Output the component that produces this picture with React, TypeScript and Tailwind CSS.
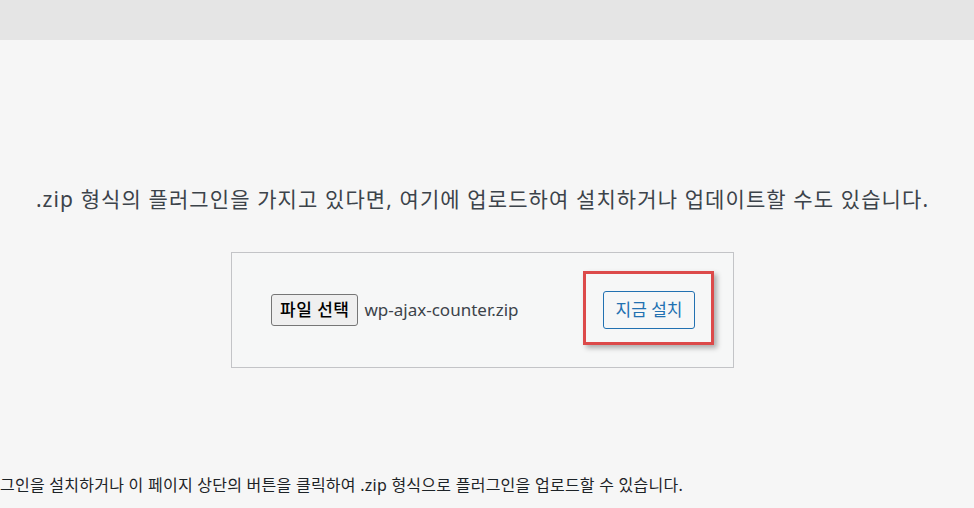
export default function App() {
  return (
    <div
      className="h-[508px] w-[974px] overflow-hidden bg-[#f6f6f6] text-[#3c434a]"
      style={{ fontFamily: '"Noto Sans", "Noto Sans CJK KR", sans-serif' }}
    >
      <div className="h-[40px] bg-[#e5e5e5]" />

      <div className="flex flex-col items-center pr-[9px] pt-[144px]">
        <p className="whitespace-nowrap text-[21px] leading-[30px] tracking-[1.1px] text-[#3c434a]">
          .zip 형식의 플러그인을 가지고 있다면, 여기에 업로드하여 설치하거나 업데이트할 수도 있습니다.
        </p>

        <div className="mt-[38px] flex h-[116px] w-[503px] items-center border border-[#c3c4c7] bg-[#f6f7f7] pl-[39px]">
          <button className="h-[32px] rounded-[3px] border border-[#767676] bg-[#efefef] px-[8px] text-[17px] font-medium tracking-[0.5px] text-black">
            파일 선택
          </button>
          <span className="ml-[6px] text-[17px] text-[#3c434a]">wp-ajax-counter.zip</span>

          <div className="relative ml-auto mr-[38px]">
            <button className="h-[38px] w-[92px] rounded-[3px] border border-[#2271b1] bg-[#f6f7f7] text-[17px] text-[#2271b1]">
              지금 설치
            </button>
            <div className="pointer-events-none absolute -bottom-[16px] -left-[20px] -right-[19px] -top-[20px] border-[3px] border-[#dc4a4a] shadow-[3px_3px_5px_rgba(0,0,0,0.3)]" />
          </div>
        </div>
      </div>

      <p className="mt-[106px] whitespace-nowrap text-[16px] leading-[22px] tracking-[0.25px] text-[#1d2327]">
        그인을 설치하거나 이 페이지 상단의 버튼을 클릭하여 .zip 형식으로 플러그인을 업로드할 수 있습니다.
      </p>
    </div>
  );
}
